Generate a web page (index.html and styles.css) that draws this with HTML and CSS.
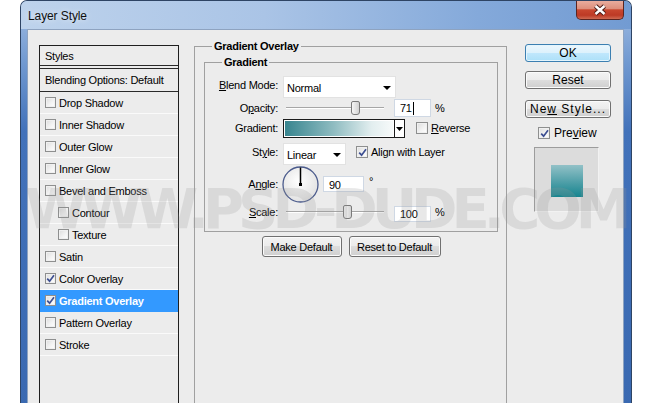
FILE: index.html
```html
<!DOCTYPE html>
<html lang="en">
<head>
    <meta charset="UTF-8">
    <meta name="viewport" content="width=device-width, initial-scale=1.0">
    <title>Layer Style</title>
    <link rel="stylesheet" href="styles.css">
</head>
<body>
    <div class="window">
        <div class="titlebar">
            <span class="title">Layer Style</span>
            <div class="close">
                <svg width="16" height="12" viewBox="0 0 16 12">
                    <path d="M3.5 2 L12.5 10 M12.5 2 L3.5 10" stroke="#4a1c17" stroke-width="4.4"/>
                    <path d="M3.5 2 L12.5 10 M12.5 2 L3.5 10" stroke="#fff" stroke-width="2.4"/>
                </svg>
            </div>
        </div>

        <div class="content">
            <ul class="styles-list">
                <li class="list-head">Styles</li>
                <li class="list-blend">Blending Options: Default</li>
                <li><span class="cb"></span>Drop Shadow</li>
                <li><span class="cb"></span>Inner Shadow</li>
                <li><span class="cb"></span>Outer Glow</li>
                <li><span class="cb"></span>Inner Glow</li>
                <li><span class="cb"></span>Bevel and Emboss</li>
                <li class="sub"><span class="cb"></span>Contour</li>
                <li class="sub"><span class="cb"></span>Texture</li>
                <li><span class="cb"></span>Satin</li>
                <li><span class="cb on"><svg width="9" height="9" viewBox="0 0 9 9"><path d="M1.2 4.6 L3.6 7.2 L8 1.2" fill="none" stroke="#3d4f92" stroke-width="1.7"/></svg></span>Color Overlay</li>
                <li class="active"><span class="cb on"><svg width="9" height="9" viewBox="0 0 9 9"><path d="M1.2 4.6 L3.6 7.2 L8 1.2" fill="none" stroke="#3d4f92" stroke-width="1.7"/></svg></span>Gradient Overlay</li>
                <li><span class="cb"></span>Pattern Overlay</li>
                <li><span class="cb"></span>Stroke</li>
            </ul>

            <div class="middle">
                <fieldset class="group outer">
                    <legend>Gradient Overlay</legend>
                    <fieldset class="group inner">
                        <legend>Gradient</legend>

                        <div class="row r-blend">
                            <span class="lbl"><u>B</u>lend Mode:</span>
                            <div class="select sel-blend">
                                <span>Normal</span>
                                <svg width="8" height="4" viewBox="0 0 8 4"><polygon points="0,0 8,0 4,4" fill="#000"/></svg>
                            </div>
                        </div>

                        <div class="row r-opacity">
                            <span class="lbl">O<u>p</u>acity:</span>
                            <div class="slider">
                                <div class="track"></div>
                                <div class="thumb" style="left: 69px"></div>
                            </div>
                            <div class="num">71<span class="caret"></span></div>
                            <span class="pct">%</span>
                        </div>

                        <div class="row r-gradient">
                            <span class="lbl">Gradient:</span>
                            <div class="gradbar">
                                <div class="ramp"></div>
                                <div class="drop">
                                    <svg width="7" height="4" viewBox="0 0 7 4"><polygon points="0,0 7,0 3.5,4" fill="#000"/></svg>
                                </div>
                            </div>
                            <span class="cb rev"></span>
                            <span class="cb-text"><u>R</u>everse</span>
                        </div>

                        <div class="row r-style">
                            <span class="lbl">St<u>y</u>le:</span>
                            <div class="select sel-style">
                                <span>Linear</span>
                                <svg width="8" height="4" viewBox="0 0 8 4"><polygon points="0,0 8,0 4,4" fill="#000"/></svg>
                            </div>
                            <span class="cb on align"><svg width="9" height="9" viewBox="0 0 9 9"><path d="M1.2 4.6 L3.6 7.2 L8 1.2" fill="none" stroke="#3d4f92" stroke-width="1.7"/></svg></span>
                            <span class="cb-text">Align with Layer</span>
                        </div>

                        <div class="row r-angle">
                            <span class="lbl">A<u>n</u>gle:</span>
                            <svg class="dial" width="37" height="37" viewBox="0 0 37 37">
                                <defs>
                                    <radialGradient id="dialfill" cx="0.45" cy="0.4" r="0.6">
                                        <stop offset="0" stop-color="#ffffff"/>
                                        <stop offset="1" stop-color="#e2e2e2"/>
                                    </radialGradient>
                                </defs>
                                <circle cx="18.5" cy="18.5" r="17.5" fill="url(#dialfill)" stroke="#4b5b8c" stroke-width="1.3"/>
                                <line x1="18.5" y1="1.5" x2="18.5" y2="18.5" stroke="#000" stroke-width="1.5"/>
                                <rect x="17" y="17" width="3" height="3" fill="#000"/>
                            </svg>
                            <div class="num num-angle">90</div>
                            <span class="deg">°</span>
                        </div>

                        <div class="row r-scale">
                            <span class="lbl"><u>S</u>cale:</span>
                            <div class="slider">
                                <div class="track"></div>
                                <div class="thumb" style="left: 61px"></div>
                            </div>
                            <div class="num num-scale">100</div>
                            <span class="pct">%</span>
                        </div>
                    </fieldset>

                    <div class="defaults">
                        <button class="btn btn-make">Make Default</button>
                        <button class="btn btn-reset-def">Reset to Default</button>
                    </div>
                </fieldset>
            </div>

            <div class="side">
                <button class="btn side-btn default">OK</button>
                <button class="btn side-btn reset">Reset</button>
                <button class="btn side-btn newstyle"><span>Ne<u>w</u> Style...</span></button>
                <div class="preview-check">
                    <span class="cb on"><svg width="9" height="9" viewBox="0 0 9 9"><path d="M1.2 4.6 L3.6 7.2 L8 1.2" fill="none" stroke="#3d4f92" stroke-width="1.7"/></svg></span>
                    <span>Pre<u>v</u>iew</span>
                </div>
                <div class="preview-box">
                    <div class="swatch"></div>
                </div>
            </div>
        </div>
    </div>

    <div class="watermark">WWW.PSD-DUDE.COM</div>
</body>
</html>
```

FILE: styles.css
```css
*{
    box-sizing: border-box;
}
body{
    margin: 0;
    background-color: #fff;
    font-family: "Liberation Sans", Arial, sans-serif;
    font-size: 11px;
    letter-spacing: -0.25px;
    color: #000;
    height: 403px;
    overflow: hidden;
}
u{
    text-decoration-thickness: 1px;
    text-underline-offset: 1px;
}

/* window frame */
.window{
    margin-left: 20px;
    width: 612px;
    height: 410px;
    border: 1px solid #2e4464;
    border-bottom: none;
    border-radius: 7px 7px 0 0;
    background: linear-gradient(180deg, #a3bee3 0, #729ad1 60px, #4272ba 130px, #3a69b1 100%);
    display: flex;
    flex-direction: column;
    overflow: hidden;
}
.titlebar{
    flex: none;
    height: 28px;
    display: flex;
    align-items: center;
    background: linear-gradient(90deg, #bed3ec 0%, #aac4e6 40%, #84a9da 75%, #729bd2 100%);
}
.title{
    padding-left: 7px;
    padding-top: 1px;
    font-size: 12px;
    letter-spacing: -0.1px;
    color: #101010;
    text-shadow: 0 0 6px rgba(255,255,255,0.8);
}
.close{
    margin-left: auto;
    margin-right: 7px;
    align-self: flex-start;
    margin-top: -1px;
    width: 48px;
    height: 20px;
    border: 1px solid #5b2520;
    border-top: none;
    border-radius: 0 0 5px 5px;
    background: linear-gradient(180deg, #eab0a2 0, #dd8f7c 45%, #c9472f 52%, #bd3a25 80%, #cf6a52 100%);
    display: flex;
    align-items: center;
    justify-content: center;
}

.content{
    flex: 1;
    min-height: 0;
    margin: 0 7px 0 6px;
    border: 1px solid #8ea3c0;
    background-color: #ececec;
    display: flex;
    align-items: flex-start;
    padding: 9px 0 0 11px;
    overflow: hidden;
}

/* styles list */
.styles-list{
    list-style-type: none;
    margin: 6px 0 0 0;
    padding: 0;
    width: 140px;
    height: 380px;
    border: 1px solid #1f1f1f;
}
.styles-list li{
    height: 22px;
    display: flex;
    align-items: center;
    padding-left: 5px;
    border-bottom: 1px solid #fafafa;
}
.styles-list li.list-head{
    height: 20px;
    border-bottom: 1px solid #2a2a2a;
    margin-bottom: 2px;
}
.styles-list li.list-blend{
    height: 24px;
    border-top: 1px solid #2a2a2a;
    border-bottom: 1px solid #2a2a2a;
}
.styles-list li.sub{
    padding-left: 18px;
}
.styles-list li.active{
    background-color: #3399ff;
    border-bottom-color: #3399ff;
    color: #fff;
    font-weight: bold;
}
.styles-list .cb{
    margin-right: 3px;
}

.cb{
    width: 11px;
    height: 11px;
    flex: none;
    border: 1px solid #8e8f8f;
    background: linear-gradient(135deg, #dcdcdc 0%, #f4f4f4 60%, #ffffff 100%);
    box-shadow: inset 0 0 0 1px #f0f0f0;
    display: inline-flex;
    align-items: center;
    justify-content: center;
}

/* middle panel */
.middle{
    margin-left: 15px;
}
.group{
    margin: 0;
    border: 1px solid #a0a0a0;
    min-width: 0;
}
.group legend{
    font-weight: bold;
    line-height: 14px;
    padding: 0 2px;
}
.outer{
    width: 313px;
    height: 380px;
    padding: 2px 8px 0 9px;
}
.outer > legend{
    margin-left: 8px;
}
.inner{
    width: 294px;
    padding: 6px 0 10px 0;
}
.inner > legend{
    margin-left: 17px;
}

.row{
    display: flex;
    align-items: center;
}
.lbl{
    width: 73px;
    margin-right: 5px;
    text-align: right;
    flex: none;
}
.r-blend{ height: 23px; }
.r-blend .lbl{ padding-bottom: 4px; }
.r-opacity{ height: 19px; }
.r-gradient{ height: 22px; }
.r-style{ height: 26px; }
.r-angle{ height: 38px; }
.r-scale{ height: 18px; }

.select{
    height: 22px;
    background-color: #fff;
    border: 1px solid #e2e2e2;
    display: flex;
    align-items: center;
    justify-content: space-between;
    padding: 2px 4px 0 3px;
}
.sel-blend{ width: 113px; }
.sel-style{ width: 63px; margin-top: 3px; }

.slider{
    position: relative;
    width: 98px;
    height: 16px;
    margin-left: 3px;
    display: flex;
    align-items: center;
}
.track{
    width: 100%;
    height: 2px;
    border-top: 1px solid #a6a6a6;
    border-bottom: 1px solid #fff;
}
.thumb{
    position: absolute;
    top: 1px;
    width: 9px;
    height: 14px;
    margin-left: -4px;
    border: 1px solid #7a7a7a;
    border-radius: 2px 2px 3px 3px;
    background: linear-gradient(90deg, #f6f6f6, #d2d2d2);
}

.num{
    width: 37px;
    height: 18px;
    margin-left: 10px;
    background-color: #fff;
    border: 1px solid #cfd8e4;
    padding: 1px 0 0 5px;
    display: flex;
    align-items: center;
}
.caret{
    width: 1px;
    height: 13px;
    background-color: #000;
    margin-left: 1px;
}
.num-angle{
    width: 41px;
    height: 16px;
    margin-left: 4px;
}
.num-scale{
    height: 16px;
    margin-top: 3px;
}
.pct{
    margin-left: 4px;
}
.deg{
    margin-left: 5px;
    margin-bottom: 6px;
}

.gradbar{
    width: 122px;
    height: 19px;
    border: 1px solid #1a1a1a;
    background-color: #fff;
    display: flex;
    margin-top: 1px;
}
.ramp{
    flex: 1;
    margin: 1px;
    background: linear-gradient(90deg, #38858f 0%, #8fbcc1 45%, #e2eeef 80%, #f7fafa 100%);
}
.drop{
    width: 10px;
    border-left: 1px solid #1a1a1a;
    display: flex;
    align-items: center;
    justify-content: center;
}
.rev{
    margin-left: 11px;
    width: 12px;
    height: 12px;
}
.align{
    margin-left: 10px;
    width: 12px;
    height: 12px;
}
.cb-text{
    margin-left: 3px;
}
.dial{
    margin-left: -1px;
    flex: none;
}

.defaults{
    display: flex;
    justify-content: center;
    gap: 7px;
    margin-top: 4px;
}

/* buttons */
.btn{
    height: 21px;
    padding: 0;
    border: 1px solid #707070;
    border-radius: 3px;
    background: linear-gradient(180deg, #f3f3f3 0, #ebebeb 50%, #dddddd 50%, #cfcfcf 100%);
    box-shadow: inset 0 0 0 1px #fbfbfb;
    font-family: inherit;
    font-size: 11px;
    letter-spacing: -0.25px;
    color: #000;
    display: flex;
    align-items: center;
    justify-content: center;
}
.btn-make{ width: 80px; }
.btn-reset-def{ width: 92px; }

.side{
    margin-left: 18px;
    margin-top: 5px;
    width: 86px;
    display: flex;
    flex-direction: column;
}
.side-btn{
    width: 86px;
    height: 18px;
    font-size: 12px;
    letter-spacing: 0;
}
.side-btn.default{
    border-color: #3c7fb1;
    background: linear-gradient(180deg, #ecf7fd 0, #dcf1fc 50%, #c0e7fc 50%, #ace0f8 100%);
    box-shadow: inset 0 0 0 1px #e4f5fd;
}
.side-btn.reset{ margin-top: 9px; }
.side-btn.newstyle{
    margin-top: 11px;
    letter-spacing: 1px;
}
.preview-check{
    margin-top: 9px;
    padding-left: 13px;
    height: 12px;
    display: flex;
    align-items: center;
    font-size: 12px;
    letter-spacing: 0;
}
.preview-check .cb{
    width: 12px;
    height: 12px;
    margin-right: 4px;
}
.preview-box{
    margin-top: 8px;
    margin-left: 9px;
    width: 65px;
    height: 65px;
    background-color: #dcdcdc;
    border-top: 1px solid #9c9c9c;
    border-left: 1px solid #9c9c9c;
    border-right: 1px solid #f2f2f2;
    border-bottom: 1px solid #f2f2f2;
    padding: 17px 0 0 16px;
}
.swatch{
    width: 32px;
    height: 32px;
    background: linear-gradient(180deg, #92c1c7 0%, #4d9ea7 55%, #16858f 100%);
}

/* site watermark laid over the dialog */
.watermark{
    position: absolute;
    left: 25px;
    top: 181px;
    font-family: "DejaVu Sans", sans-serif;
    font-weight: bold;
    font-size: 56px;
    line-height: 56px;
    letter-spacing: -6px;
    color: rgba(150, 150, 150, 0.22);
    white-space: nowrap;
    pointer-events: none;
}
```
